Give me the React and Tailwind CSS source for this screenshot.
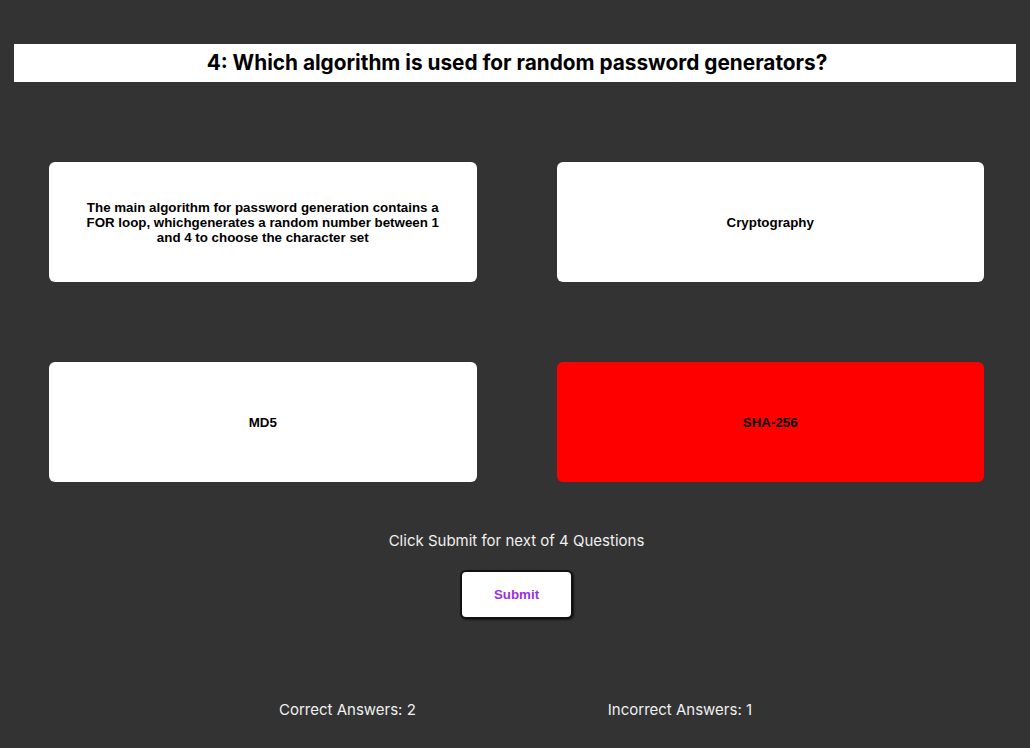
import React from 'react';

const answers = [
  {
    text: 'The main algorithm for password generation contains a FOR loop, whichgenerates a random number between 1 and 4 to choose the character set',
    wrong: false,
  },
  { text: 'Cryptography', wrong: false },
  { text: 'MD5', wrong: false },
  { text: 'SHA-256', wrong: true },
];

const App = () => {
  return (
    <div className="min-h-[748px] bg-[#333333] pt-[44px] font-['Inter',sans-serif]">
      <div className="mx-[14px] h-[38px] bg-white flex items-center justify-center">
        <h1 className="text-[20.8px] font-bold text-black leading-none pl-[4px]">
          4: Which algorithm is used for random password generators?
        </h1>
      </div>

      <div className="grid grid-cols-2 gap-x-[80px] gap-y-[80px] pl-[49px] pr-[46px] mt-[80px]">
        {answers.map((a, i) => (
          <button
            key={i}
            className={`h-[120px] rounded-[6px] flex items-center justify-center px-[34px] font-['Liberation_Sans',Arial,sans-serif] text-[13.33px] font-bold leading-[15px] text-black ${
              a.wrong ? 'bg-[#ff0000]' : 'bg-white'
            }`}
          >
            {a.text}
          </button>
        ))}
      </div>

      <p className="mt-[50px] text-center text-[15px] text-[#f0f0f0] leading-[18px] pl-[3px]">
        Click Submit for next of 4 Questions
      </p>

      <div className="flex justify-center mt-[20px] pl-[3px]">
        <button className="w-[113px] h-[49px] bg-white rounded-[6px] border-2 border-[#111] shadow-[1px_1px_2px_rgba(0,0,0,0.6)] font-['Liberation_Sans',Arial,sans-serif] text-[13.33px] font-bold text-[#9b30e0]">
          Submit
        </button>
      </div>

      <div className="flex mt-[82px] text-[15px] text-[#f0f0f0] leading-[18px]">
        <span className="ml-[279px]">Correct Answers: 2</span>
        <span className="ml-[192px]">Incorrect Answers: 1</span>
      </div>
    </div>
  );
};

export default App;
